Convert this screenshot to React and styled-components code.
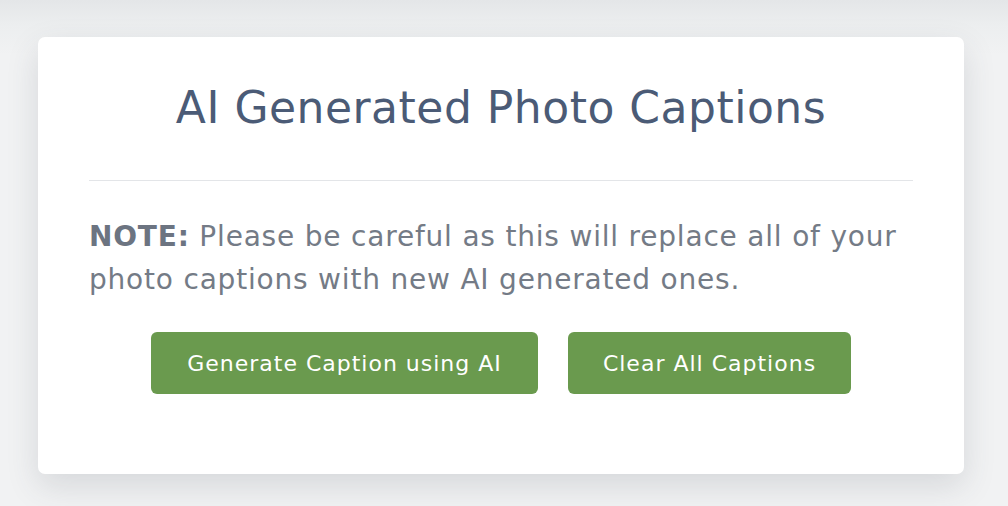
import React from 'react';
import styled, { createGlobalStyle } from 'styled-components';

const GlobalStyle = createGlobalStyle`
  html, body {
    margin: 0;
    padding: 0;
    background: #f1f2f3;
    font-family: "DejaVu Sans", "Open Sans", sans-serif;
  }
`;

const Page = styled.div`
  width: 1008px;
  height: 506px;
  box-sizing: border-box;
  padding: 37px 44px 0 38px;
  overflow: hidden;
  background: linear-gradient(to bottom, #e4e6e8 0px, #eceeef 25px, #f1f2f3 55px);
`;

const Card = styled.div`
  width: 926px;
  height: 437px;
  box-sizing: border-box;
  background: #ffffff;
  border-radius: 7px;
  box-shadow: 0 12px 32px rgba(60, 70, 80, 0.15);
  padding: 0 51px;
  display: flex;
  flex-direction: column;
`;

const Title = styled.h2`
  margin: 0;
  padding: 43px 0 45px;
  text-align: center;
  font-size: 44px;
  font-weight: 400;
  letter-spacing: 0.5px;
  line-height: 55px;
  color: #4b5b76;
  border-bottom: 1.5px solid #e3e5e8;
`;

const Note = styled.p`
  margin: 34px 0 0;
  font-size: 28px;
  letter-spacing: 0.8px;
  line-height: 43px;
  color: #747b86;
`;

const Strong = styled.strong`
  font-weight: 700;
  color: #6c7481;
`;

const Actions = styled.div`
  display: flex;
  justify-content: center;
  gap: 30px;
  margin-top: 31px;
`;

const Button = styled.button`
  height: 62px;
  width: ${p => p.$w}px;
  padding: 0;
  border: none;
  border-radius: 6px;
  background: #6a9a4e;
  color: #ffffff;
  font-family: inherit;
  font-size: 22px;
  letter-spacing: 1px;
  cursor: pointer;
`;

export default function App() {
  return (
    <>
      <GlobalStyle />
      <Page>
        <Card>
          <Title>AI Generated Photo Captions</Title>
          <Note>
            <Strong>NOTE:</Strong> Please be careful as this will replace all of your photo captions with new AI generated ones.
          </Note>
          <Actions>
            <Button $w={387}>Generate Caption using AI</Button>
            <Button $w={283}>Clear All Captions</Button>
          </Actions>
        </Card>
      </Page>
    </>
  );
}
